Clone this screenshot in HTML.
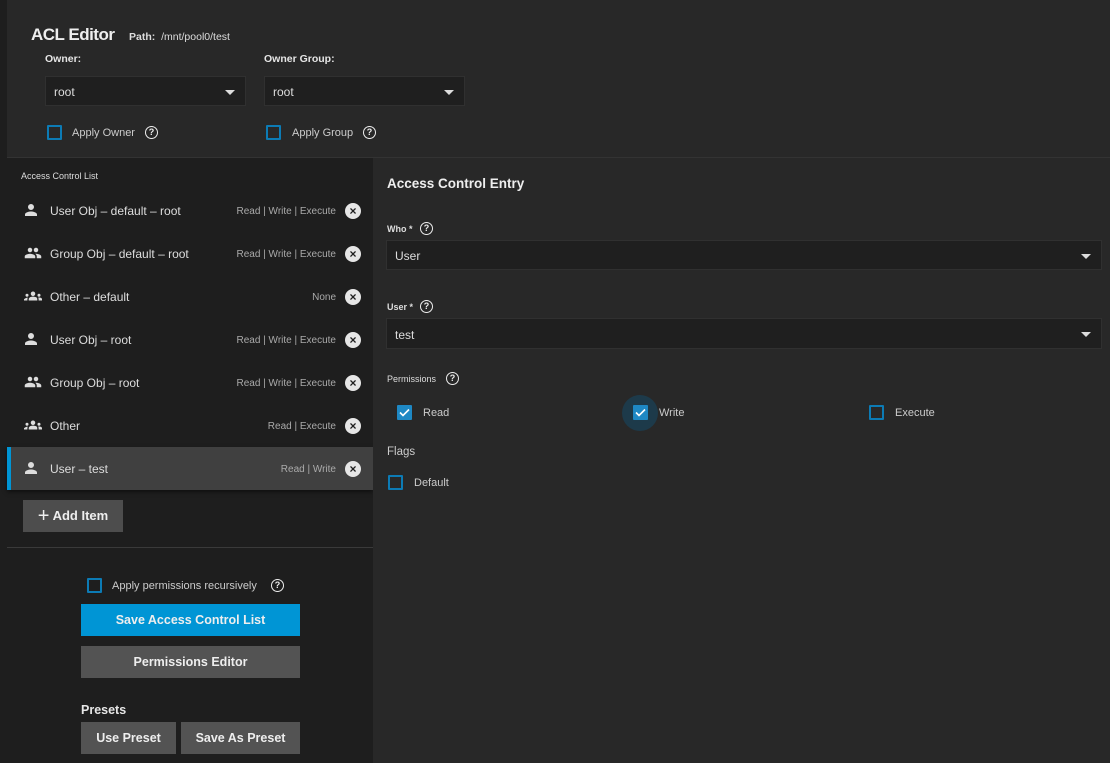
<!DOCTYPE html>
<html><head><meta charset="utf-8"><style>
*{box-sizing:border-box;margin:0;padding:0}
body{width:1110px;height:763px;background:#1e1e1e;font-family:"Liberation Sans",sans-serif;color:#e6e6e6;position:relative;overflow:hidden;font-size:11px}
.a{position:absolute}
.top{left:7px;top:0;width:1103px;height:158px;background:#282828;border-bottom:1px solid #333}
.sel{background:#1f1f1f;border:1px solid #303030;height:30px;font-size:12px;padding:8px 8px;color:#ddd}
.arrow{position:absolute;right:10px;top:13px;width:0;height:0;border-left:5px solid transparent;border-right:5px solid transparent;border-top:5px solid #ddd}
.cb{width:15px;height:15px;border:2px solid #0c7bb5;border-radius:1px}
.cbc{width:15px;height:15px;background:#1e88c4;border-radius:1px}
.q{width:13px;height:13px;border:1.6px solid #eee;border-radius:50%;font-size:9px;font-weight:bold;text-align:center;line-height:10px;color:#eee}
.row{left:7px;width:366px;height:43px}
.row .t{position:absolute;left:43px;top:15px;font-size:12px;color:#ddd}
.row .p{position:absolute;right:37px;top:17px;font-size:10px;color:#aaa}
.row .x{position:absolute;right:12px;top:14px;width:16px;height:16px;border-radius:50%;background:#e6e6e6;color:#1e1e1e;font-size:12px;font-weight:bold;text-align:center;line-height:16px}
.row svg{position:absolute;left:15px;top:12px}
.btn{color:#eee;font-weight:bold;font-size:12.5px;text-align:center;line-height:32px;height:32px;background:#535353}
.right{left:373px;top:158px;width:737px;height:605px;background:#282828}
.lbl{font-size:9px;font-weight:bold;color:#ddd}
</style></head><body>
<div class="a" style="left:0;top:0;width:7px;height:763px;background:#1e1e1e"></div>
<div class="a top"></div>
<div class="a" style="left:31px;top:25px;font-size:17px;letter-spacing:-0.5px;font-weight:bold;color:#eee">ACL Editor</div>
<div class="a" style="left:129px;top:31px;font-size:10.5px;font-weight:bold;color:#ddd">Path:&nbsp; <span style="font-weight:normal">/mnt/pool0/test</span></div>
<div class="a" style="left:45px;top:53px;font-size:10.5px;font-weight:bold">Owner:</div>
<div class="a" style="left:264px;top:53px;font-size:10.5px;font-weight:bold">Owner Group:</div>
<div class="a sel" style="left:45px;top:76px;width:201px">root<div class="arrow"></div></div>
<div class="a sel" style="left:264px;top:76px;width:201px">root<div class="arrow"></div></div>
<div class="a cb" style="left:47px;top:125px"></div>
<div class="a" style="left:72px;top:127px;font-size:11px;color:#ccc">Apply Owner</div>
<div class="a q" style="left:145px;top:126px">?</div>
<div class="a cb" style="left:266px;top:125px"></div>
<div class="a" style="left:292px;top:127px;font-size:11px;color:#ccc">Apply Group</div>
<div class="a q" style="left:363px;top:126px">?</div>

<div class="a" style="left:21px;top:171px;font-size:9px;color:#ddd">Access Control List</div>

<div class="a row" style="top:189px"><svg width="18" height="18" viewBox="0 0 24 24"><path fill="#ddd" d="M12 12a4 4 0 1 0 0-8 4 4 0 0 0 0 8zm0 2c-2.7 0-8 1.3-8 4v2h16v-2c0-2.7-5.3-4-8-4z"/></svg><div class="t">User Obj – default – root</div><div class="p">Read | Write | Execute</div><div class="x">×</div></div>
<div class="a row" style="top:232px"><svg width="22" height="18" viewBox="0 0 24 24"><path fill="#ddd" d="M16 11a3 3 0 1 0 0-6 3 3 0 0 0 0 6zm-8 0a3 3 0 1 0 0-6 3 3 0 0 0 0 6zm0 2c-2.3 0-7 1.2-7 3.5V19h14v-2.5C15 14.2 10.3 13 8 13zm8 0c-.3 0-.6 0-1 .1 1.2.8 2 2 2 3.4V19h6v-2.5c0-2.3-4.7-3.5-7-3.5z"/></svg><div class="t">Group Obj – default – root</div><div class="p">Read | Write | Execute</div><div class="x">×</div></div>
<div class="a row" style="top:275px"><svg width="22" height="18" viewBox="0 0 24 24"><path fill="#ddd" d="M12 12.8c1.6 0 3.1.4 4.2.9.9.4 1.5 1.4 1.5 2.4V18H6.3v-1.8c0-1 .6-1.900 1.5-2.4 1.1-.5 2.6-.9 4.2-.9zM4 13a2 2 0 1 0 0-4 2 2 0 0 0 0 4zm1.1 1.1A7 7 0 0 0 0 16.4V18h4.5v-1.6c0-.8.2-1.6.6-2.3zM20 13a2 2 0 1 0 0-4 2 2 0 0 0 0 4zm4 3.4c0-.8-.5-1.5-1.2-1.9a7 7 0 0 0-3.9-.4c.4.7.6 1.5.6 2.3V18H24zM12 6a3 3 0 1 1 0 6 3 3 0 0 1 0-6z"/></svg><div class="t">Other – default</div><div class="p">None</div><div class="x">×</div></div>
<div class="a row" style="top:318px"><svg width="18" height="18" viewBox="0 0 24 24"><path fill="#ddd" d="M12 12a4 4 0 1 0 0-8 4 4 0 0 0 0 8zm0 2c-2.7 0-8 1.3-8 4v2h16v-2c0-2.7-5.3-4-8-4z"/></svg><div class="t">User Obj – root</div><div class="p">Read | Write | Execute</div><div class="x">×</div></div>
<div class="a row" style="top:361px"><svg width="22" height="18" viewBox="0 0 24 24"><path fill="#ddd" d="M16 11a3 3 0 1 0 0-6 3 3 0 0 0 0 6zm-8 0a3 3 0 1 0 0-6 3 3 0 0 0 0 6zm0 2c-2.3 0-7 1.2-7 3.5V19h14v-2.5C15 14.2 10.3 13 8 13zm8 0c-.3 0-.6 0-1 .1 1.2.8 2 2 2 3.4V19h6v-2.5c0-2.3-4.7-3.5-7-3.5z"/></svg><div class="t">Group Obj – root</div><div class="p">Read | Write | Execute</div><div class="x">×</div></div>
<div class="a row" style="top:404px"><svg width="22" height="18" viewBox="0 0 24 24"><path fill="#ddd" d="M12 12.8c1.6 0 3.1.4 4.2.9.9.4 1.5 1.4 1.5 2.4V18H6.3v-1.8c0-1 .6-1.9 1.5-2.4 1.1-.5 2.6-.9 4.2-.9zM4 13a2 2 0 1 0 0-4 2 2 0 0 0 0 4zm1.1 1.1A7 7 0 0 0 0 16.4V18h4.5v-1.6c0-.8.2-1.6.6-2.3zM20 13a2 2 0 1 0 0-4 2 2 0 0 0 0 4zm4 3.4c0-.8-.5-1.5-1.2-1.9a7 7 0 0 0-3.9-.4c.4.7.6 1.5.6 2.3V18H24zM12 6a3 3 0 1 1 0 6 3 3 0 0 1 0-6z"/></svg><div class="t">Other</div><div class="p">Read | Execute</div><div class="x">×</div></div>
<div class="a row" style="top:447px;background:#404040;border-left:4px solid #0095d5;box-shadow:0 2px 4px rgba(0,0,0,.5)"><svg width="18" height="18" viewBox="0 0 24 24" style="left:11px"><path fill="#ddd" d="M12 12a4 4 0 1 0 0-8 4 4 0 0 0 0 8zm0 2c-2.7 0-8 1.3-8 4v2h16v-2c0-2.7-5.3-4-8-4z"/></svg><div class="t" style="left:39px">User – test</div><div class="p">Read | Write</div><div class="x">×</div></div>

<div class="a btn" style="left:23px;top:500px;width:100px;background:#4d4d4d;font-size:13px"><span style="font-size:20px;font-weight:normal;vertical-align:-2px">+</span> Add Item</div>
<div class="a" style="left:7px;top:547px;width:366px;height:1px;background:#3a3a3a"></div>
<div class="a cb" style="left:87px;top:578px"></div>
<div class="a" style="left:112px;top:580px;font-size:11px;color:#ccc">Apply permissions recursively</div>
<div class="a q" style="left:271px;top:579px">?</div>
<div class="a btn" style="left:81px;top:604px;width:219px;background:#0095d5">Save Access Control List</div>
<div class="a btn" style="left:81px;top:646px;width:219px">Permissions Editor</div>
<div class="a" style="left:81px;top:703px;font-size:12.5px;font-weight:bold">Presets</div>
<div class="a btn" style="left:81px;top:722px;width:95px">Use Preset</div>
<div class="a btn" style="left:181px;top:722px;width:119px">Save As Preset</div>

<div class="a right"></div>
<div class="a" style="left:387px;top:176px;font-size:13.5px;font-weight:bold;color:#eee">Access Control Entry</div>
<div class="a lbl" style="left:387px;top:224px">Who *</div>
<div class="a q" style="left:420px;top:222px">?</div>
<div class="a sel" style="left:386px;top:240px;width:716px;height:30px">User<div class="arrow"></div></div>
<div class="a lbl" style="left:387px;top:302px">User *</div>
<div class="a q" style="left:420px;top:300px">?</div>
<div class="a sel" style="left:386px;top:318px;width:716px;height:31px;padding-top:9px">test<div class="arrow"></div></div>
<div class="a lbl" style="left:387px;top:374px;font-weight:normal">Permissions</div>
<div class="a q" style="left:446px;top:372px">?</div>
<div class="a cbc" style="left:397px;top:405px"><svg width="15" height="15"><path d="M3 7.5l3 3 6-6" stroke="#fff" stroke-width="1.6" fill="none"/></svg></div>
<div class="a" style="left:423px;top:407px;color:#ccc">Read</div>
<div class="a" style="left:622px;top:395px;width:36px;height:36px;border-radius:50%;background:#1d3a4a"></div>
<div class="a cbc" style="left:633px;top:405px"><svg width="15" height="15"><path d="M3 7.5l3 3 6-6" stroke="#fff" stroke-width="1.6" fill="none"/></svg></div>
<div class="a" style="left:659px;top:407px;color:#ccc">Write</div>
<div class="a cb" style="left:869px;top:405px"></div>
<div class="a" style="left:895px;top:407px;color:#ccc">Execute</div>
<div class="a" style="left:387px;top:446px;font-size:11.5px;color:#ccc">Flags</div>
<div class="a cb" style="left:388px;top:475px"></div>
<div class="a" style="left:414px;top:477px;color:#ccc">Default</div>
</body></html>
